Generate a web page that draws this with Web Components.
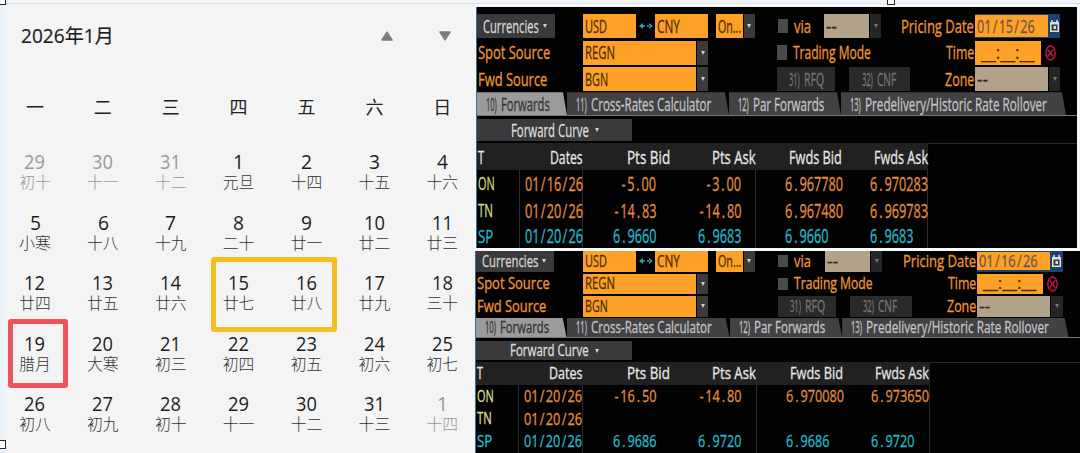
<!DOCTYPE html>
<html lang="zh-CN">
<head>
<meta charset="utf-8">
<title>2026年1月</title>
<style>
  body {
    margin: 0;
    width: 1080px;
    height: 453px;
    overflow: hidden;
    background: #f8f9fb;
    font-family: "Open Sans", "Noto Sans CJK SC", sans-serif;
  }
</style>
</head>
<body>
<fx-page>
  <month-calendar slot="calendar"></month-calendar>
  <fx-terminal slot="terminals" date="01/15/26" rows="ON,01/16/26,-5.00,-3.00,6.967780,6.970283|TN,01/20/26,-14.83,-14.80,6.967480,6.969783|SP,01/20/26,6.9660,6.9683,6.9660,6.9683"></fx-terminal>
  <fx-terminal slot="terminals" compact date="01/16/26" rows="ON,01/20/26,-16.50,-14.80,6.970080,6.973650|TN,01/20/26,,,,|SP,01/20/26,6.9686,6.9720,6.9686,6.9720"></fx-terminal>
</fx-page>

<script>
// Squeezes its text horizontally into the width set by the "w" attribute
class FitText extends HTMLElement {
  constructor() {
    super();
    this.attachShadow({ mode: "open" });
  }

  connectedCallback() {
    const w = Number(this.getAttribute("w"));
    this.shadowRoot.innerHTML = /* HTML */ `
      <style>
        :host {
          display: block;
          flex: none;
          width: calc(${w} * var(--u, 1px));
          line-height: 1;
          white-space: nowrap;
        }
        span {
          display: inline-block;
          transform-origin: 0 50%;
          vertical-align: top;
        }
      </style>
      <span><slot></slot></span>
    `;
    const span = this.shadowRoot.querySelector("span");
    const natural = span.offsetWidth;
    const target = this.getBoundingClientRect().width;
    if (natural) span.style.transform = `scaleX(${target / natural})`;
  }
}

// Number with equal cells for digits and punctuation
class MonoNumber extends HTMLElement {
  constructor() {
    super();
    this.attachShadow({ mode: "open" });
  }

  connectedCallback() {
    const text = this.getAttribute("value");
    const html = text
      .replace(/\//g, "<s>/</s>")
      .replace(/\./g, "<i>.</i>")
      .replace(/-/g, "<b>-</b>");
    this.shadowRoot.innerHTML = /* HTML */ `
      <style>
        :host { display: block; margin-right: -0.8px; }
        i, b, s { font-style: normal; font-weight: inherit; text-decoration: none; }
        i { padding: 0 0.153em; }
        b { padding: 0 0.125em; }
        s { padding: 0 0.102em; }
      </style>
      <fit-text w="${text.length * 7.25}">${html}</fit-text>
    `;
  }
}

class MonthCalendar extends HTMLElement {
  constructor() {
    super();
    this.attachShadow({ mode: "open" });
  }

  connectedCallback() {
    const lunar = (
      "初十 十一 十二 元旦 十四 十五 十六 小寒 十八 十九 二十 廿一 廿二 廿三 廿四 廿五 廿六 廿七 廿八 廿九 三十 " +
      "腊月 大寒 初三 初四 初五 初六 初七 初八 初九 初十 十一 十二 十三 十四"
    ).split(" ");
    const days = lunar.map((name, i) => {
      const out = i < 3 || i > 33;
      const day = i < 3 ? 29 + i : i > 33 ? i - 33 : i - 2;
      return `<div class="day ${out ? "out" : ""}">
        <fit-text class="num" w="${day > 9 ? 21 : 10.6}">${day}</fit-text>
        <span class="lunar">${name}</span>
      </div>`;
    });

    this.shadowRoot.innerHTML = /* HTML */ `
      <style>
        :host {
          display: block;
          position: relative;
          box-sizing: border-box;
          width: 475px;
          height: 449px;
          padding-left: 1px;
          color: #1c1c1c;
          background: linear-gradient(90deg, #e9f1f7 0, #f0f4f9 5px, #f4f4f5 8px);
        }
        header {
          display: flex;
          align-items: center;
          height: 64px;
          padding: 0 24px 0 20px;
          font-size: 19.5px;
        }
        .title { -webkit-text-stroke: 0.2px; }
        header svg { margin-left: 46px; }
        header svg.first { margin-left: auto; }
        .grid {
          display: grid;
          grid-template-columns: repeat(7, 67.9px);
        }
        .week {
          height: 78px;
          font-size: 18px;
          line-height: 78px;
          text-align: center;
          color: #222;
        }
        .day {
          display: flex;
          flex-direction: column;
          align-items: center;
          height: 60.5px;
        }
        .num { margin-top: 6px; font-size: 20px; }
        .lunar {
          font-size: 15.8px;
          font-weight: 300;
          line-height: 20px;
          color: #333;
        }
        .out, .out .lunar { color: #999; }
        .mark {
          position: absolute;
          box-sizing: border-box;
          border-radius: 3px;
        }
        .yellow {
          left: 211px;
          top: 253px;
          width: 126px;
          height: 75px;
          border: 5px solid #f6bf1f;
        }
        .red {
          left: 8px;
          top: 315px;
          width: 60px;
          height: 69px;
          border: 5.5px solid #ee545b;
        }
      </style>
      <header>
        <fit-text class="title" w="93">2026年1月</fit-text>
        <svg class="first" width="12" height="10" viewBox="0 0 12 10"><path d="M6 1.2 11 9H1Z" fill="#7c7c7c" stroke="#7c7c7c" stroke-width="1.5" stroke-linejoin="round"/></svg>
        <svg width="12" height="10" viewBox="0 0 12 10"><path d="M6 8.8 11 1H1Z" fill="#7c7c7c" stroke="#7c7c7c" stroke-width="1.5" stroke-linejoin="round"/></svg>
      </header>
      <div class="grid">
        ${[..."一二三四五六日"].map((d) => `<div class="week">${d}</div>`).join("")}
        ${days.join("")}
      </div>
      <div class="mark yellow"></div>
      <div class="mark red"></div>
    `;
  }
}

// Input box; "drop" adds the arrow button at its right
class FxField extends HTMLElement {
  constructor() {
    super();
    this.attachShadow({ mode: "open" });
  }

  connectedCallback() {
    const w = this.getAttribute("w");
    const drop = this.hasAttribute("drop");
    this.shadowRoot.innerHTML = /* HTML */ `
      <style>
        :host {
          display: flex;
          flex: none;
          height: 100%;
          color: #4e2c05;
        }
        .box {
          display: flex;
          align-items: center;
          box-sizing: border-box;
          width: calc(${w} * var(--u));
          padding-left: calc(2 * var(--u));
          background: #fea127;
        }
        :host([muted]) .box { background: #b3a28a; color: #33291d; }
        .drop {
          display: grid;
          place-items: center;
          width: calc(11 * var(--u));
          margin-left: 1px;
          background: #3b3b3d;
        }
        :host([muted]) .drop { background: #252525; }
        .drop::before {
          content: "";
          border: 2.5px solid transparent;
          border-top: 4px solid #d0d0d0;
          border-bottom: 0;
        }
        :host([muted]) .drop::before { border-top-color: #777; }
      </style>
      <div class="box"><slot></slot></div>
      ${drop ? '<div class="drop"></div>' : ""}
    `;
  }
}

class FxTerminal extends HTMLElement {
  constructor() {
    super();
    this.attachShadow({ mode: "open" });
  }

  renderTable() {
    const heads = [["T", 6], ["Dates", 33], ["Pts Bid", 43], ["Pts Ask", 44], ["Fwds Bid", 53], ["Fwds Ask", 54]];
    const head = heads.map(([t, w]) => `<div class="th"><fit-text w="${w}">${t}</fit-text></div>`).join("");
    const rows = this.getAttribute("rows").split("|").map((line) => {
      const [tenor, ...values] = line.split(",");
      const cells = values.map((v) => {
        const short = v.length < 8 ? "short" : "";
        return `<div class="td ${short}">${v ? `<mono-number value="${v}"></mono-number>` : ""}</div>`;
      });
      return `<div class="tr ${tenor.toLowerCase()}">
        <div class="td tenor"><fit-text w="${tenor === "ON" ? 16.5 : 15}">${tenor}</fit-text></div>${cells.join("")}
      </div>`;
    });
    return `<div class="tr head">${head}</div>${rows.join("")}`;
  }

  connectedCallback() {
    this.shadowRoot.innerHTML = /* HTML */ `
      <style>
        :host {
          --u: 1px;
          --row: 24px;
          --gap: 2.5px;
          --tab: 24px;
          --curve: 22px;
          --head: 27px;
          --line: 27px;
          --last: 24px;
          --num: 19.5px;
          --text: 18.5px;
          display: block;
          box-sizing: border-box;
          width: calc(600 * var(--u));
          height: 241px;
          margin-left: 2px;
          padding-top: 7px;
          background: #020203;
          box-shadow: -1px 0 #3f6d91;
          font-size: var(--text);
          -webkit-text-stroke: 0.3px;
          color: #d6d6d6;
        }
        :host([compact]) {
          --u: 1.006px;
          --row: 20.5px;
          --gap: 2px;
          --tab: 20.5px;
          --curve: 19px;
          --head: 23px;
          --line: 22.5px;
          --last: 22.5px;
          --num: 16.8px;
          --text: 15.8px;
          height: 202px;
          margin-left: 1px;
          padding-top: 0;
        }
        :host([compact]) fit-text { padding-top: 0.6px; }
        :host([compact]) mono-number { padding-top: 1px; }
        .row {
          display: flex;
          align-items: center;
          height: var(--row);
          margin-bottom: var(--gap);
        }
        .btn {
          display: flex;
          align-items: center;
          box-sizing: border-box;
          height: 100%;
          background: #3a3a3c;
        }
        .caret {
          border: 2.5px solid transparent;
          border-top: 4px solid #d0d0d0;
          border-bottom: 0;
        }
        .label { color: #f2962f; }
        .check {
          width: calc(10 * var(--u));
          height: 60%;
          background: #4b4b4d;
        }
        .off { color: #777; background: #2a2a2b; gap: calc(4 * var(--u)); }
        .right { display: flex; align-items: center; height: 100%; margin-left: auto; }
        .right > .label { margin-right: calc(1 * var(--u)); }
        .sp { flex: none; width: calc(var(--s) * var(--u)); }
        .date {
          display: flex;
          align-items: center;
          height: 100%;
          width: calc(85 * var(--u));
          background: #1c4370;
        }
        .date fx-field { height: 88%; color: #6d5549; }
        .date svg { margin-left: 2px; }
        .tabs {
          display: flex;
          box-sizing: border-box;
          height: var(--tab);
          margin-top: calc(var(--gap) * -0.5);
          border-bottom: 1px solid #777;
        }
        .tab {
          display: flex;
          align-items: center;
          box-sizing: border-box;
          padding-left: calc(9 * var(--u));
          gap: calc(4 * var(--u));
          background: #424244;
          color: #c4c4c4;
          clip-path: polygon(0 0, calc(100% - 4px) 0, 100% 100%, 0 100%);
        }
        .tab.on { background: #9b9b9b; color: #333; }
        .curve {
          width: calc(155 * var(--u));
          height: var(--curve);
          margin: 3px 0 2px;
          padding-left: calc(34 * var(--u));
          gap: calc(6 * var(--u));
          color: #dedede;
        }
        .table { border-top: 1px solid #29292a; }
        .tr {
          display: grid;
          grid-template-columns: 43fr 63fr 87fr 86fr 86fr 86fr;
          width: calc(451 * var(--u));
          height: var(--line);
          color: #e38e3c;
          font-size: var(--num);
        }
        .head {
          height: var(--head);
          margin-top: -1px;
          background: #212122;
          color: #e6e6e6;
          font-size: var(--text);
        }
        .th, .td {
          display: flex;
          align-items: center;
          justify-content: flex-end;
          box-sizing: border-box;
        }
        .td { padding-bottom: 1px; }
        :host([compact]) .td { padding-bottom: 0; }
        .th:first-child, .td.tenor { justify-content: flex-start; padding-left: 1px; }
        .td:nth-child(1), .td:nth-child(2), .td:nth-child(4), .td:nth-child(6) { border-right: 1px solid #2c2c2e; }
        .short { padding-right: calc(14.6 * var(--u)); }
        .tenor { color: #d9dc8c; font-size: var(--text); }
        .tr.sp { width: calc(451 * var(--u)); height: var(--last); }
        .tr.sp, .tr.sp .tenor { color: #21bccb; }
      </style>

      <div class="row">
        <div class="btn" style="width: calc(78 * var(--u))">
          <span class="sp" style="--s: 6"></span><fit-text w="56">Currencies</fit-text>
          <span class="sp" style="--s: 4"></span><span class="caret"></span>
        </div>
        <span class="sp" style="--s: 28"></span>
        <fx-field w="53"><fit-text w="22">USD</fit-text></fx-field>
        <span class="sp" style="--s: 3"></span>
        <svg width="14" height="8" viewBox="0 0 14 8"><path d="M0 4 4 1V7ZM14 4 10 1V7ZM3 3.3H6V4.7H3ZM8 3.3H11V4.7H8Z" fill="#26a5a8"/></svg>
        <span class="sp" style="--s: 2"></span>
        <fx-field w="52.5"><fit-text w="23">CNY</fit-text></fx-field>
        <span class="sp" style="--s: 8"></span>
        <fx-field w="27" drop style="margin-right: auto"><fit-text w="23">On...</fit-text></fx-field>
        <span class="check"></span>
        <span class="sp" style="--s: 6"></span>
        <fit-text class="label" w="17">via</fit-text>
        <span class="sp" style="--s: 13.5"></span>
        <fx-field w="45" drop muted><fit-text w="11">--</fit-text></fx-field>
        <span class="sp" style="--s: 20"></span>
        <fit-text class="label" w="73">Pricing Date</fit-text>
        <span class="sp" style="--s: 1"></span>
        <div class="date">
          <fx-field w="73"><mono-number value="${this.getAttribute("date")}"></mono-number></fx-field>
          <svg width="9" height="12" viewBox="0 0 9 12"><path d="M1.2 0h1.6v2h3.4V0h1.6v2H9v10H0V2h1.2Z" fill="#ddd"/><path d="M1.5 4.5h6v6h-6Z" fill="#343b45"/><path d="M3.5 6h2.5v3H3.5Z" fill="#ddd"/></svg>
        </div>
        <span class="sp" style="--s: 17"></span>
      </div>

      <div class="row">
        <span class="sp" style="--s: 1"></span>
        <fit-text class="label" w="72">Spot Source</fit-text>
        <span class="sp" style="--s: 33"></span>
        <fx-field w="113" drop><fit-text w="30">REGN</fit-text></fx-field>
        <span class="sp" style="--s: 69"></span>
        <span class="check"></span>
        <span class="sp" style="--s: 6"></span>
        <fit-text class="label" w="78">Trading Mode</fit-text>
        <div class="right">
          <fit-text class="label" w="28">Time</fit-text>
          <fx-field w="66"><span class="sp" style="--s: 4"></span><fit-text w="53">__:__:__</fit-text></fx-field>
          <span class="sp" style="--s: 4"></span>
          <svg width="11" height="16" viewBox="0 0 11 16" preserveAspectRatio="none" fill="none" stroke="#c21848" stroke-width="1.4"><ellipse cx="5.5" cy="8" rx="4.7" ry="7"/><path d="M2.8 4.5 8.2 11.5M8.2 4.5 2.8 11.5"/></svg>
          <span class="sp" style="--s: 21"></span>
        </div>
      </div>

      <div class="row">
        <span class="sp" style="--s: 1"></span>
        <fit-text class="label" w="69">Fwd Source</fit-text>
        <span class="sp" style="--s: 36"></span>
        <fx-field w="113" drop><fit-text w="23">BGN</fit-text></fx-field>
        <span class="sp" style="--s: 69"></span>
        <div class="btn off" style="width: calc(58 * var(--u)); padding-left: 12px"><fit-text w="11">31)</fit-text><fit-text w="20">RFQ</fit-text></div>
        <span class="sp" style="--s: 14"></span>
        <div class="btn off" style="width: calc(61 * var(--u)); padding-left: 13px"><fit-text w="11">32)</fit-text><fit-text w="19">CNF</fit-text></div>
        <div class="right">
          <fit-text class="label" w="29">Zone</fit-text>
          <fx-field w="73" drop muted><fit-text w="11">--</fit-text></fx-field>
          <span class="sp" style="--s: 17"></span>
        </div>
      </div>

      <div class="tabs">
        <div class="tab on" style="width: calc(90 * var(--u))"><fit-text w="11">10)</fit-text><fit-text w="49">Forwards</fit-text></div>
        <div class="tab" style="width: calc(162 * var(--u))"><fit-text w="11">11)</fit-text><fit-text w="120">Cross-Rates Calculator</fit-text></div>
        <div class="tab" style="width: calc(112 * var(--u))"><fit-text w="11">12)</fit-text><fit-text w="71">Par Forwards</fit-text></div>
        <div class="tab" style="width: calc(225 * var(--u))"><fit-text w="11">13)</fit-text><fit-text w="182">Predelivery/Historic Rate Rollover</fit-text></div>
      </div>
      <div class="btn curve"><fit-text w="78">Forward Curve</fit-text><span class="caret"></span></div>
      <div class="table">${this.renderTable()}</div>
    `;
  }
}

class FxPage extends HTMLElement {
  constructor() {
    super();
    this.attachShadow({ mode: "open" });
  }

  connectedCallback() {
    this.shadowRoot.innerHTML = /* HTML */ `
      <style>
        :host {
          display: block;
          position: relative;
          height: 453px;
          overflow: hidden;
        }
        .strip {
          box-sizing: border-box;
          height: 4px;
          background: #f1f4f9;
          border-bottom: 1px solid #dbe1eb;
        }
        .content { display: flex; }
        .terminals {
          display: flex;
          flex-direction: column;
          gap: 3px;
          padding-top: 3px;
        }
        /* selection handles lying over the edges */
        .handle {
          position: absolute;
          box-sizing: border-box;
          width: 8px;
          height: 9px;
          border: 1.5px solid #24272e;
          background: #fff;
        }
      </style>
      <div class="strip"></div>
      <div class="content">
        <slot name="calendar"></slot>
        <div class="terminals"><slot name="terminals"></slot></div>
      </div>
      <div class="handle" style="left: -2px; top: -4px"></div>
      <div class="handle" style="left: 887px; top: -4px"></div>
      <div class="handle" style="left: -2px; top: 440px"></div>
    `;
  }
}

customElements.define("fit-text", FitText);
customElements.define("mono-number", MonoNumber);
customElements.define("fx-field", FxField);
customElements.define("month-calendar", MonthCalendar);
customElements.define("fx-terminal", FxTerminal);
customElements.define("fx-page", FxPage);
</script>
</body>
</html>
